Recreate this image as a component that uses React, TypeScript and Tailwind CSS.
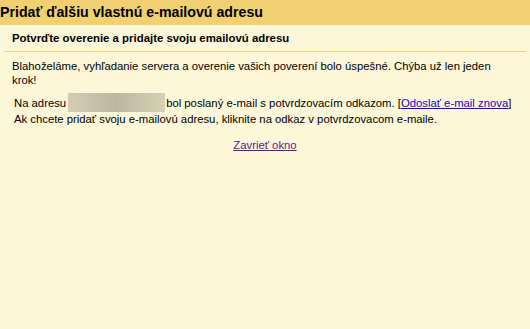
export default function App() {
  return (
    <div className="w-[530px] h-[329px] bg-[#fdf7d9] font-['Liberation_Sans',Arial,sans-serif] text-black">
      <div className="h-[25px] bg-[#f0d070] flex items-center">
        <h1 className="text-[14.2px] font-bold leading-none">Pridať ďalšiu vlastnú e-mailovú adresu</h1>
      </div>
      <div className="px-1">
        <div className="px-2 pt-[6px] pb-[6px] border-b border-[#f0d070] text-[11.4px] font-bold leading-[14px]">
          Potvrďte overenie a pridajte svoju emailovú adresu
        </div>
      </div>
      <div className="px-3 pt-[7px] text-[11.3px] leading-[14px]">
        <p>Blahoželáme, vyhľadanie servera a overenie vašich poverení bolo úspešné. Chýba už len jeden krok!</p>
        <div className="mt-[6px] pl-[2px]">
          <div className="flex items-center whitespace-nowrap">
            <span className="shrink-0">Na adresu</span>
            <span className="shrink-0 ml-[2px] mr-[1px] inline-block w-[97px] h-[19px] bg-gradient-to-r from-[#d3ceb3] via-[#bdb79e] to-[#d6d2b6]" />
            <span className="shrink-0">
              bol poslaný e-mail s potvrdzovacím odkazom. [<a href="#" className="text-[#2200cc] underline">Odoslať e-mail znova</a>]
            </span>
          </div>
          <div>Ak chcete pridať svoju e-mailovú adresu, kliknite na odkaz v potvrdzovacom e-maile.</div>
        </div>
        <div className="mt-[12px] text-center">
          <a href="#" className="text-[#551a8b] underline">Zavrieť okno</a>
        </div>
      </div>
    </div>
  );
}
